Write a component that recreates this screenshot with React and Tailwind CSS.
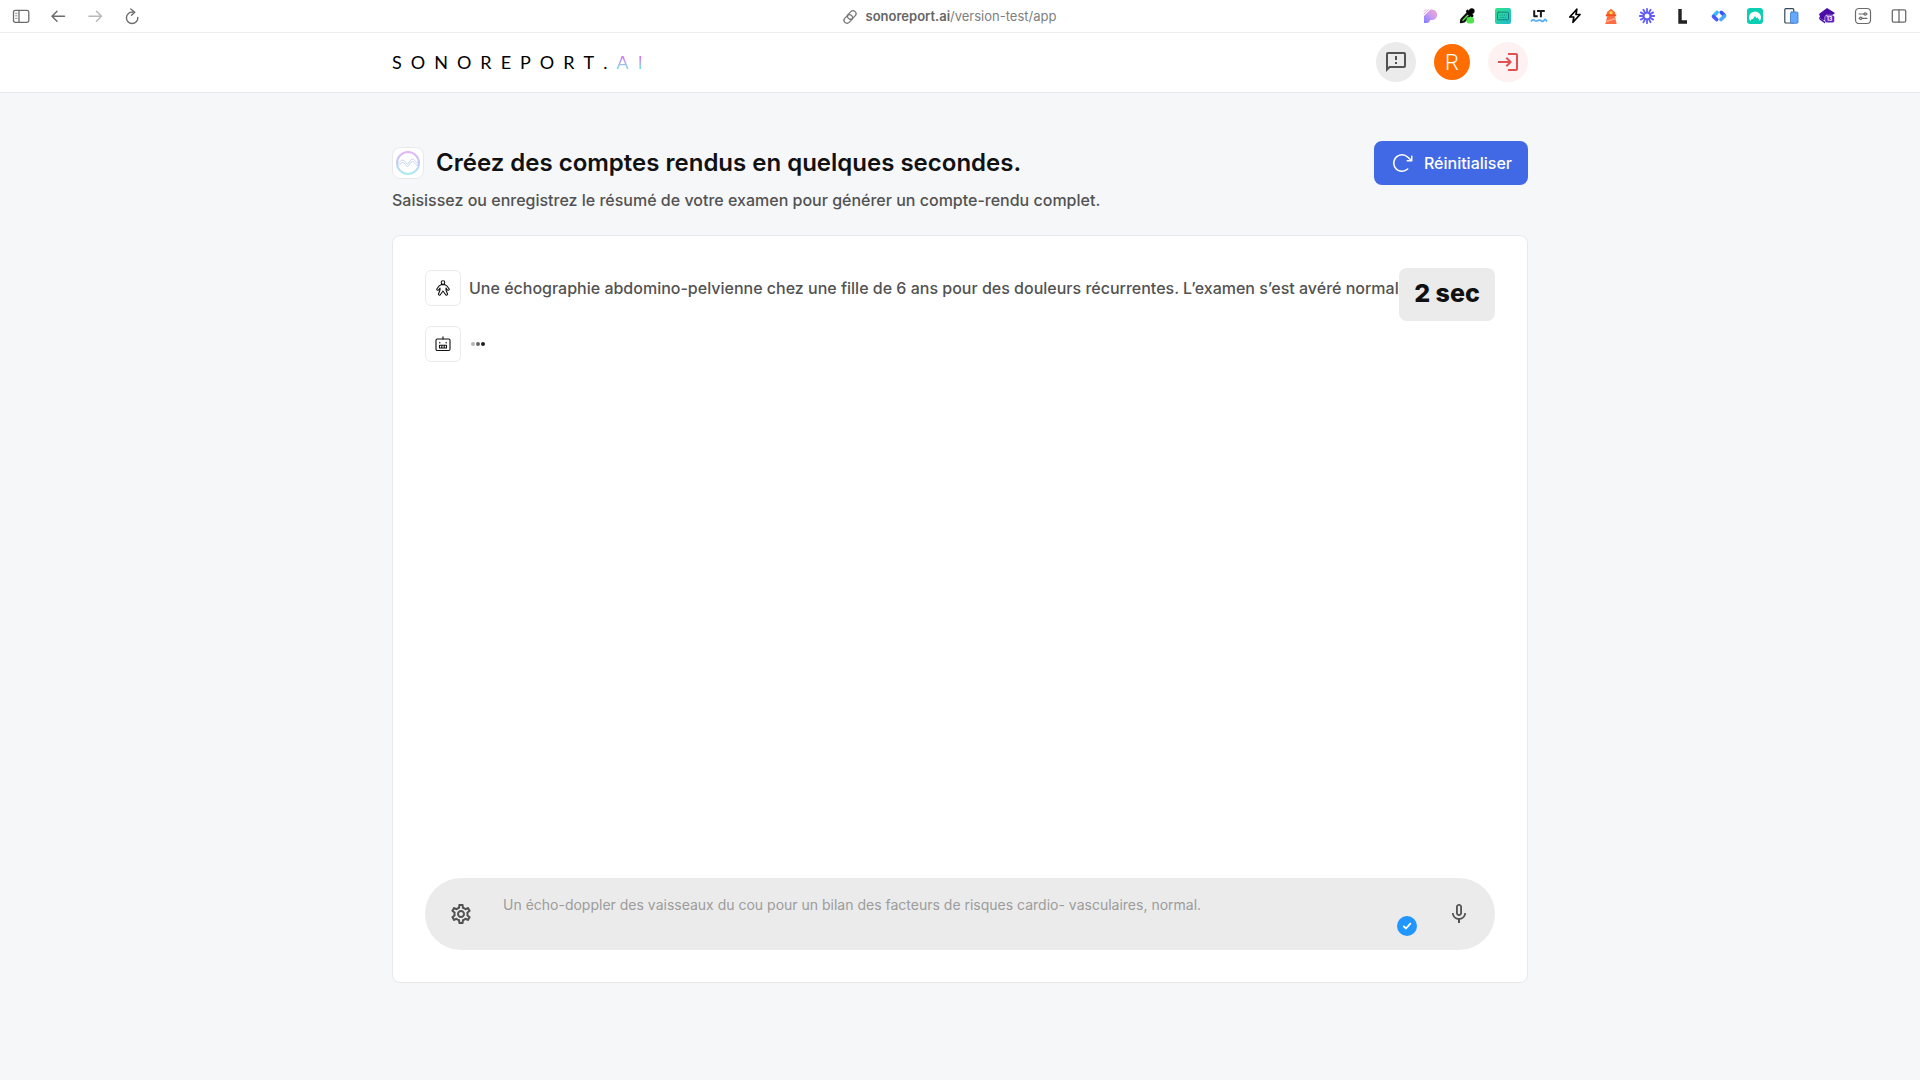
import { MdOutlineFeedback, MdLogin, MdMicNone, MdOutlineSettings } from "react-icons/md";
import { PiArrowClockwise } from "react-icons/pi";

function NavIcon({ label, className = "text-[#6b6b6b]", children }) {
    return (
        <button aria-label={label} className={`block size-4 ${className}`}>
            <svg viewBox="0 0 16 16" fill="none" stroke="currentColor" strokeWidth="1.2" strokeLinecap="round" strokeLinejoin="round" className="size-4 overflow-visible">
                {children}
            </svg>
        </button>
    )
}

function BrowserBar() {
    return (
        <nav className="grid grid-cols-[1fr_auto_1fr] items-center h-[33px] px-[13px] bg-white border-b border-[#eeeeee]">
            <div className="flex gap-[21px]">
                <NavIcon label="Sidebar">
                    <rect x="0.5" y="2.3" width="15.3" height="12" rx="1.8" strokeWidth="1.3" />
                    <path d="M6 2.3v12" strokeWidth="1.3" />
                    <path d="M2.6 5.3h1.4M2.6 7.8h1.4M2.6 10.3h1.4" strokeWidth="0.8" />
                </NavIcon>
                <NavIcon label="Back">
                    <path d="M14.5 8.2H2.3M7 3.2l-5 5 5 5" strokeWidth="1.5" />
                </NavIcon>
                <NavIcon label="Forward" className="text-[#b8b8b8]">
                    <path d="M2 8.2H14M9.5 3.2l5 5-5 5" strokeWidth="1.5" />
                </NavIcon>
                <NavIcon label="Reload">
                    <path d="M8.8 4.2A5.7 5.7 0 1 0 13.8 9.5M6.8 1l4 3.2-3.3 3" strokeWidth="1.4" />
                </NavIcon>
            </div>
            <a href="#" className="flex items-center gap-2 pt-px pr-[22px] text-[13px] text-[#808080]">
                <svg viewBox="0 0 16 16" fill="none" stroke="#777777" strokeWidth="1.3" className="size-4">
                    <rect x="5" y="3" width="9.5" height="6" rx="3" transform="rotate(-45 9.75 6)" />
                    <rect x="1.5" y="7" width="9.5" height="6" rx="3" transform="rotate(-45 6.25 10)" />
                </svg>
                <span><span className="font-semibold text-[#666666]">sonoreport.ai</span>/version-test/app</span>
            </a>
            <div className="flex justify-end gap-5">
                <NavIcon label="Pastel">
                    <defs>
                        <linearGradient id="pastel" x1="1" y1="0" x2="0" y2="1">
                            <stop offset="0" stopColor="#f9a8c9" />
                            <stop offset="0.5" stopColor="#c79bf2" />
                            <stop offset="1" stopColor="#7f7bff" />
                        </linearGradient>
                    </defs>
                    <path d="M7.5 1.5H9a5.2 5.2 0 0 1 0 10.4H7.2A4 4 0 0 1 3.5 15H1V8z" fill="url(#pastel)" stroke="none" />
                    <path d="M1 3.5 3 1.5M1 6l4.5-4.5" stroke="#e0a5e8" strokeWidth="1" />
                </NavIcon>
                <NavIcon label="Color picker">
                    <path d="M1.8 14.2 2.3 11.5 8.5 5l2.5 2.5-5.8 6z" stroke="#111111" strokeWidth="2" fill="#5ee04f" />
                    <path d="M8.5 3.2 13 7.7M10.5 5.5l2.2-2.2" stroke="#000000" strokeWidth="3" />
                    <circle cx="12.8" cy="3.1" r="2.8" fill="#000000" stroke="none" />
                    <rect x="7.5" y="9" width="7.5" height="6.5" rx="2.5" fill="#4ee34a" stroke="none" />
                </NavIcon>
                <NavIcon label="Keyboard">
                    <defs>
                        <linearGradient id="keys" x1="0" y1="0" x2="1" y2="1">
                            <stop offset="0" stopColor="#2ee68b" />
                            <stop offset="1" stopColor="#1fb9d0" />
                        </linearGradient>
                    </defs>
                    <rect width="16" height="16" rx="2" fill="url(#keys)" stroke="none" />
                    <rect x="2.5" y="4.2" width="11" height="7.6" rx="1" stroke="#18766f" strokeWidth="0.9" />
                    <path d="M4.5 7h7M5.5 9.5h5" stroke="#18766f" strokeWidth="0.8" strokeDasharray="1 1.2" strokeLinecap="butt" />
                </NavIcon>
                <NavIcon label="LanguageTool">
                    <path d="M3.2 2.2v6h3.5M6 2.9h7.8M9.9 2.9v6.4" stroke="#1b1b1b" strokeWidth="2" strokeLinecap="butt" />
                    <path d="M.5 13q1.3-2 2.6-.8t2.5.8 2.5-.8 2.5.8 2.5-.8 2.4.8" stroke="#5aaef5" strokeWidth="1.8" />
                </NavIcon>
                <NavIcon label="Bolt">
                    <path d="M9.8 1.2 2.8 9h4l-.8 5.3L13 6.5H9z" stroke="#000000" strokeWidth="1.7" />
                </NavIcon>
                <NavIcon label="Lighthouse">
                    <path d="M3.8 4.3 8 .8l4.2 3.5V7H3.8z" fill="#fa6b3c" stroke="none" />
                    <path d="M2.8 6.3h10.4v2H2.8z" fill="#f4511e" stroke="none" />
                    <path d="M4.3 8h7.4l2 8H2.3z" fill="#ff6e42" stroke="none" />
                    <path d="m4 13.3 8.5-2.8" stroke="#ffab91" strokeWidth="1.5" />
                    <rect x="6.6" y="3.5" width="2.8" height="2.6" fill="#ffe33b" stroke="none" />
                </NavIcon>
                <NavIcon label="Loom">
                    <path d="M8 .8v4M8 11.2v4M.8 8h4M11.2 8h4M4.4 1.8l2 3.4M9.6 10.8l2 3.4M11.6 1.8l-2 3.4M6.4 10.8l-2 3.4M1.8 4.4l3.4 2M10.8 9.6l3.4 2M1.8 11.6l3.4-2M10.8 6.4l3.4-2" stroke="#625df5" strokeWidth="1.8" />
                    <circle cx="8" cy="8" r="3.5" stroke="#625df5" strokeWidth="1.7" />
                </NavIcon>
                <NavIcon label="Ledger">
                    <path d="M5 1v13h7" stroke="#222222" strokeWidth="3.4" strokeLinecap="butt" strokeLinejoin="miter" />
                </NavIcon>
                <NavIcon label="Links">
                    <path d="M6 4.5 2.5 8" stroke="#36b8ff" strokeWidth="3.6" />
                    <path d="m2.6 8.6 3.2 3" stroke="#4a5cff" strokeWidth="3.6" />
                    <path d="m10.2 4.4 3.2 3" stroke="#3d52ff" strokeWidth="3.6" />
                    <path d="M13.5 8 10 11.5" stroke="#46a9ff" strokeWidth="3.6" />
                </NavIcon>
                <NavIcon label="VPN">
                    <rect width="16" height="16" rx="3" fill="#0bceb2" stroke="none" />
                    <path d="M3.2 13a6 6 0 1 1 9.6 0L10.5 9.3l-1 1L8 8l-2.3 3.3-.7-.6z" fill="#ffffff" stroke="none" />
                </NavIcon>
                <NavIcon label="Responsive viewer">
                    <rect x="1.8" y=".7" width="9" height="14.3" rx="1" fill="#ffffff" stroke="#34495e" />
                    <rect x="7.5" y="4" width="7.5" height="11.3" rx="1.2" fill="#64a7ff" stroke="#3779c9" strokeWidth="0.8" />
                </NavIcon>
                <NavIcon label="Web developer">
                    <path d="m8 0 8 5-3 2.5V12H4L0 9.5l1-1-1-2.5z" fill="#4b0ca8" stroke="none" />
                    <path d="m0 9.5 6 4v2l-5.500-4z" fill="#4b0ca8" stroke="none" />
                    <rect x="5.8" y="7.2" width="9.7" height="7.6" rx="2" fill="#5a22c0" stroke="#ffffff" strokeWidth="0.5" />
                    <text x="7.4" y="13" fontSize="5.5" fontWeight="700" fill="#ffffff" stroke="none" fontFamily="Inter, sans-serif">13</text>
                </NavIcon>
                <NavIcon label="Site settings">
                    <rect x=".5" y=".5" width="15" height="15" rx="3.5" />
                    <path d="M4 6h4.8M11.5 6h.7M4 10.3h.6M7.1 10.3H12" />
                    <circle cx="10.2" cy="6" r="1.2" />
                    <circle cx="5.8" cy="10.3" r="1.2" />
                </NavIcon>
                <NavIcon label="Split view">
                    <rect x="1.3" y="1.8" width="13.4" height="12.4" rx="1.5" strokeWidth="1.3" />
                    <path d="M8 1.8v12.4" strokeWidth="1.3" />
                </NavIcon>
            </div>
        </nav>
    )
}

function Wordmark() {
    return (
        <a href="#" className="flex gap-[9px] font-[Lato,sans-serif] text-lg leading-6 text-black">
            {"SONOREPORT.".split("").map((letter, i) => <span key={i}>{letter}</span>)}
            <span className="flex gap-[9px] bg-linear-to-b from-[#d65cf5] from-20% to-[#62e4e4] to-80% bg-clip-text text-transparent">
                <span>A</span>
                <span>I</span>
            </span>
        </a>
    )
}

function Header() {
    return (
        <header className="bg-white border-b border-[#e7e7e7]">
            <div className="flex items-center justify-between w-full max-w-[1136px] h-[59px] pb-px mx-auto">
                <Wordmark />
                <div className="flex items-center gap-[18px]">
                    <button aria-label="Feedback" className="flex items-center justify-center size-10 rounded-full bg-[#ebebeb] text-[#525252]">
                        <MdOutlineFeedback size={24} />
                    </button>
                    <button aria-label="Profil" className="flex items-center justify-center size-9 pt-0.5 rounded-full bg-[#ff6d00] font-[Roboto,sans-serif] font-light text-[22px] leading-none text-white">
                        R
                    </button>
                    <button aria-label="Se déconnecter" className="flex items-center justify-center size-10 rounded-full bg-[#fdf1f1] text-[#e05252]">
                        <MdLogin size={24} />
                    </button>
                </div>
            </div>
        </header>
    )
}

function WaveLogo() {
    return (
        <span className="flex items-center justify-center size-8 rounded-lg bg-white border border-[#e9e9e9]">
            <svg viewBox="0 0 24 24" fill="none" stroke="url(#wave)" className="size-6">
                <defs>
                    <linearGradient id="wave" x1="0" y1="0" x2="0" y2="24" gradientUnits="userSpaceOnUse">
                        <stop offset="0" stopColor="#e5b5f3" />
                        <stop offset="0.5" stopColor="#bfcdf2" />
                        <stop offset="1" stopColor="#abeff0" />
                    </linearGradient>
                </defs>
                <circle cx="12" cy="12" r="11" strokeWidth="2" />
                <path d="M1 12c2 2 3-3 5.5-3s3.500 4 5 4 2.500-5 5-5 3 5 6.500 3.500" strokeWidth="0.9" />
                <path d="M1 14.500c2 2 3-3 5.500-3s3.500 4 5 4 2.500-5 5-5 3 5 6.500 3.500" strokeWidth="0.9" />
            </svg>
        </span>
    )
}

function Avatar({ children }) {
    return (
        <span className="flex items-center justify-center shrink-0 size-9 rounded-md bg-white border border-[#ebebeb]">
            <svg viewBox="0 0 16 16" fill="none" stroke="#111111" strokeWidth="1.1" strokeLinecap="round" strokeLinejoin="round" className="size-4">
                {children}
            </svg>
        </span>
    )
}

function Composer() {
    return (
        <form className="flex items-center h-[72px] px-6 rounded-full bg-[#ebebeb] text-[#525252]">
            <button type="button" aria-label="Paramètres" className="shrink-0">
                <MdOutlineSettings size={24} />
            </button>
            <div className="relative flex-1 h-full ml-[30px] mr-[29px]">
                <textarea
                    aria-label="Résumé de l'examen"
                    placeholder="Un écho-doppler des vaisseaux du cou pour un bilan des facteurs de risques cardio- vasculaires, normal."
                    className="block w-full h-full pt-[17px] resize-none outline-none text-sm text-[#525252] placeholder:text-[#9c9c9c]"
                />
                <span className="absolute right-px bottom-[14px] flex items-center justify-center size-5 rounded-full bg-[#2196ff]">
                    <svg viewBox="0 0 10 10" fill="none" stroke="#ffffff" strokeWidth="1.8" strokeLinecap="round" strokeLinejoin="round" className="size-2.5">
                        <path d="M1.8 5.4 4 7.5 8.3 2.7" />
                    </svg>
                </span>
            </div>
            <button type="button" aria-label="Dicter" className="shrink-0">
                <MdMicNone size={24} />
            </button>
        </form>
    )
}

export default function App() {
    return (
        <div className="flex flex-col min-h-screen bg-[#f6f7f9] font-[Inter,sans-serif]">
            <BrowserBar />
            <Header />
            <main className="flex flex-1 flex-col w-full max-w-[1136px] mx-auto pt-12 pb-[97px]">
                <div className="flex items-start justify-between">
                    <div>
                        <div className="flex items-center gap-3 h-11">
                            <WaveLogo />
                            <h1 className="font-semibold text-2xl text-[#111111]">Créez des comptes rendus en quelques secondes.</h1>
                        </div>
                        <p className="mt-[3px] font-medium text-base text-[#525252]">
                            Saisissez ou enregistrez le résumé de votre examen pour générer un compte-rendu complet.
                        </p>
                    </div>
                    <button className="flex items-center gap-2.5 h-11 px-4 rounded-lg bg-[#4169e6] font-medium text-base text-white">
                        <PiArrowClockwise size={24} />
                        Réinitialiser
                    </button>
                </div>
                <section className="relative flex flex-1 flex-col justify-between mt-[23px] px-8 pt-[34px] pb-8 rounded-lg bg-white border border-[#e8e8e8]">
                    <div className="flex flex-col gap-5">
                        <div className="flex items-center gap-2">
                            <Avatar>
                                <circle cx="8" cy="2.6" r="1.8" />
                                <path d="M6.3 4.6h3.4c1.8.6 3.6 2.8 4.6 4.7-.4 1.2-1.8 1.2-2.3.2l-1-1.5v2l1.6 4.2c-.4 1.2-1.6 1.3-2.1.3L8 11l-2.5 3.500c-.5 1-1.7.9-2.1-.3L5 10V8L4 9.500c-.5 1-1.9 1-2.3-.2 1-1.9 2.8-4.1 4.6-4.7z" />
                            </Avatar>
                            <p className="font-medium text-base text-[#525252]">
                                Une échographie abdomino-pelvienne chez une fille de 6 ans pour des douleurs récurrentes. L’examen s’est avéré normal
                            </p>
                        </div>
                        <div className="flex items-center gap-2">
                            <Avatar>
                                <rect x="1" y="3" width="14" height="11.5" rx="1.2" />
                                <path d="M8 3V.8M4.800 6.3v.7M11.200 6.3v.7" />
                                <path d="M4.500 9.300h7v2.700h-7zM6.800 9.300V12M9.200 9.300V12" />
                            </Avatar>
                            <div className="flex gap-px pl-0.5">
                                <span className="size-1 rounded-full bg-[#b5b5b5]"></span>
                                <span className="size-1 rounded-full bg-[#666666]"></span>
                                <span className="size-1 rounded-full bg-[#1f1f1f]"></span>
                            </div>
                        </div>
                    </div>
                    <div className="absolute top-8 right-8 flex items-center justify-center w-24 h-[53px] pb-0.5 rounded-lg bg-[#ebebeb] font-extrabold text-[25px] text-[#111111]">
                        2 sec
                    </div>
                    <Composer />
                </section>
            </main>
        </div>
    )
}
